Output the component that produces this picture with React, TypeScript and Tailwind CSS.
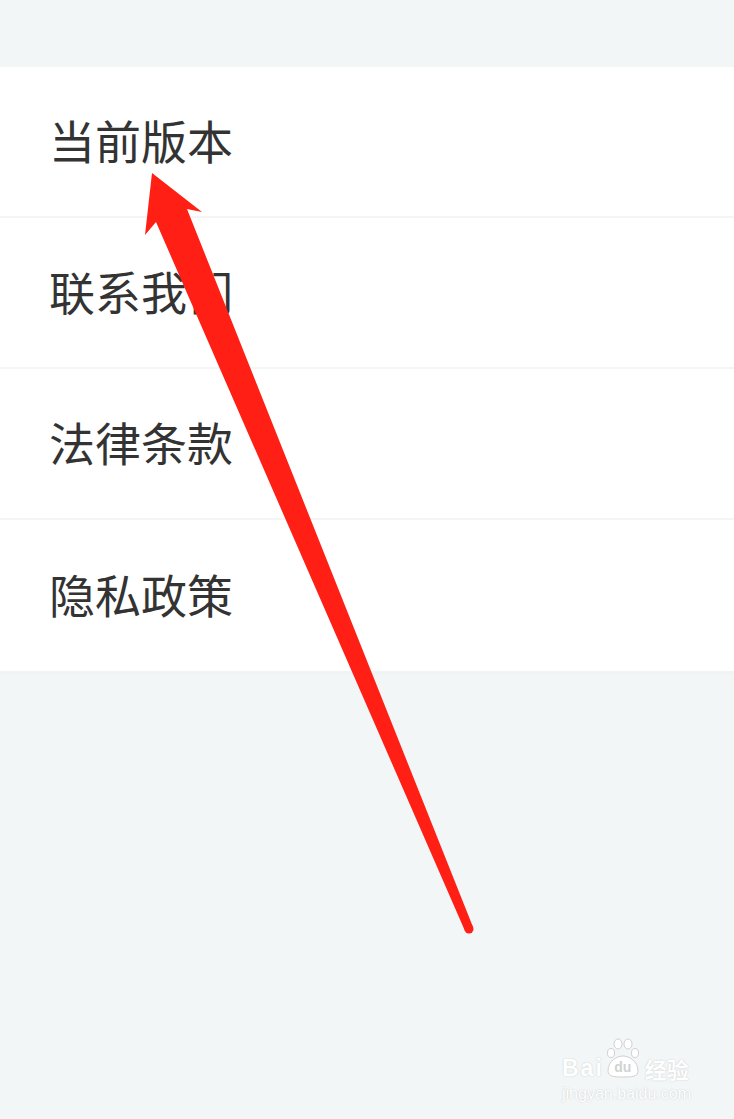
import React from "react";

const ITEMS = ["当前版本", "联系我们", "法律条款", "隐私政策"];

const FONT = { fontFamily: '"Noto Sans CJK SC", "Noto Sans", sans-serif' };

function Arrow() {
  return (
    <svg
      className="pointer-events-none absolute left-0 top-0"
      width="734"
      height="1119"
      viewBox="0 0 734 1119"
    >
      <polygon
        fill="#ff1f14"
        points="152,173 202,212 187,209 473,927 465,931 156,222 145,235"
      />
      <circle cx="469" cy="929" r="4.5" fill="#ff1f14" />
    </svg>
  );
}

function Watermark() {
  return (
    <div
      className="absolute left-[562px] top-[1038px] flex w-[134px] flex-col items-start text-white"
      style={{ fontFamily: '"Liberation Sans", Arial, sans-serif' }}
    >
      <div className="flex h-[40px] items-end">
        <span className="mb-[-2px] text-[23px] font-bold leading-none tracking-[2px] [text-shadow:0_0_1.5px_#bfc4c4]">
          Bai
        </span>
        <div className="relative ml-[1px] flex h-[40px] w-[36px] items-end justify-center">
          <svg className="absolute left-0 top-0" width="36" height="40" viewBox="0 0 36 40">
            <g fill="#fff" stroke="#c8cccc" strokeWidth="0.9">
              <ellipse cx="13" cy="6" rx="4" ry="5" />
              <ellipse cx="23" cy="6" rx="4" ry="5" />
              <ellipse cx="6" cy="15" rx="3.5" ry="4.5" />
              <ellipse cx="30" cy="15" rx="3.5" ry="4.5" />
              <path d="M3 33 C3 23 12 18 18 18 C24 18 33 23 33 33 C33 39 26 39 18 39 C10 39 3 39 3 33 Z" />
            </g>
          </svg>
          <span className="relative mb-[4px] text-[14px] font-bold leading-none text-[#cfd3d3]">du</span>
        </div>
        <span
          className="mb-[-1px] ml-[4px] text-[22px] font-bold leading-none [text-shadow:0_0_1.5px_#bfc4c4]"
          style={FONT}
        >
          经验
        </span>
      </div>
      <span className="mt-[8px] text-[16px] leading-none [text-shadow:0_0_1.5px_#bfc4c4]">
        jingyan.baidu.com
      </span>
    </div>
  );
}

export default function App() {
  return (
    <div className="relative h-[1119px] w-[734px] overflow-hidden bg-[#f2f6f6]" style={FONT}>
      <div className="h-[67px]" />
      <div className="flex flex-col bg-white">
        {ITEMS.map((label, i) => (
          <div
            key={label}
            className={
              "flex h-[151px] items-center pb-[6px] pl-[49px] " +
              (i < ITEMS.length - 1 ? "border-b-2 border-[#f4f5f5]" : "")
            }
          >
            <span className="text-[46px] leading-none text-[#333333]">{label}</span>
          </div>
        ))}
      </div>
      <div className="h-[4px] bg-[#f2f3f3]" />
      <Watermark />
      <Arrow />
    </div>
  );
}
